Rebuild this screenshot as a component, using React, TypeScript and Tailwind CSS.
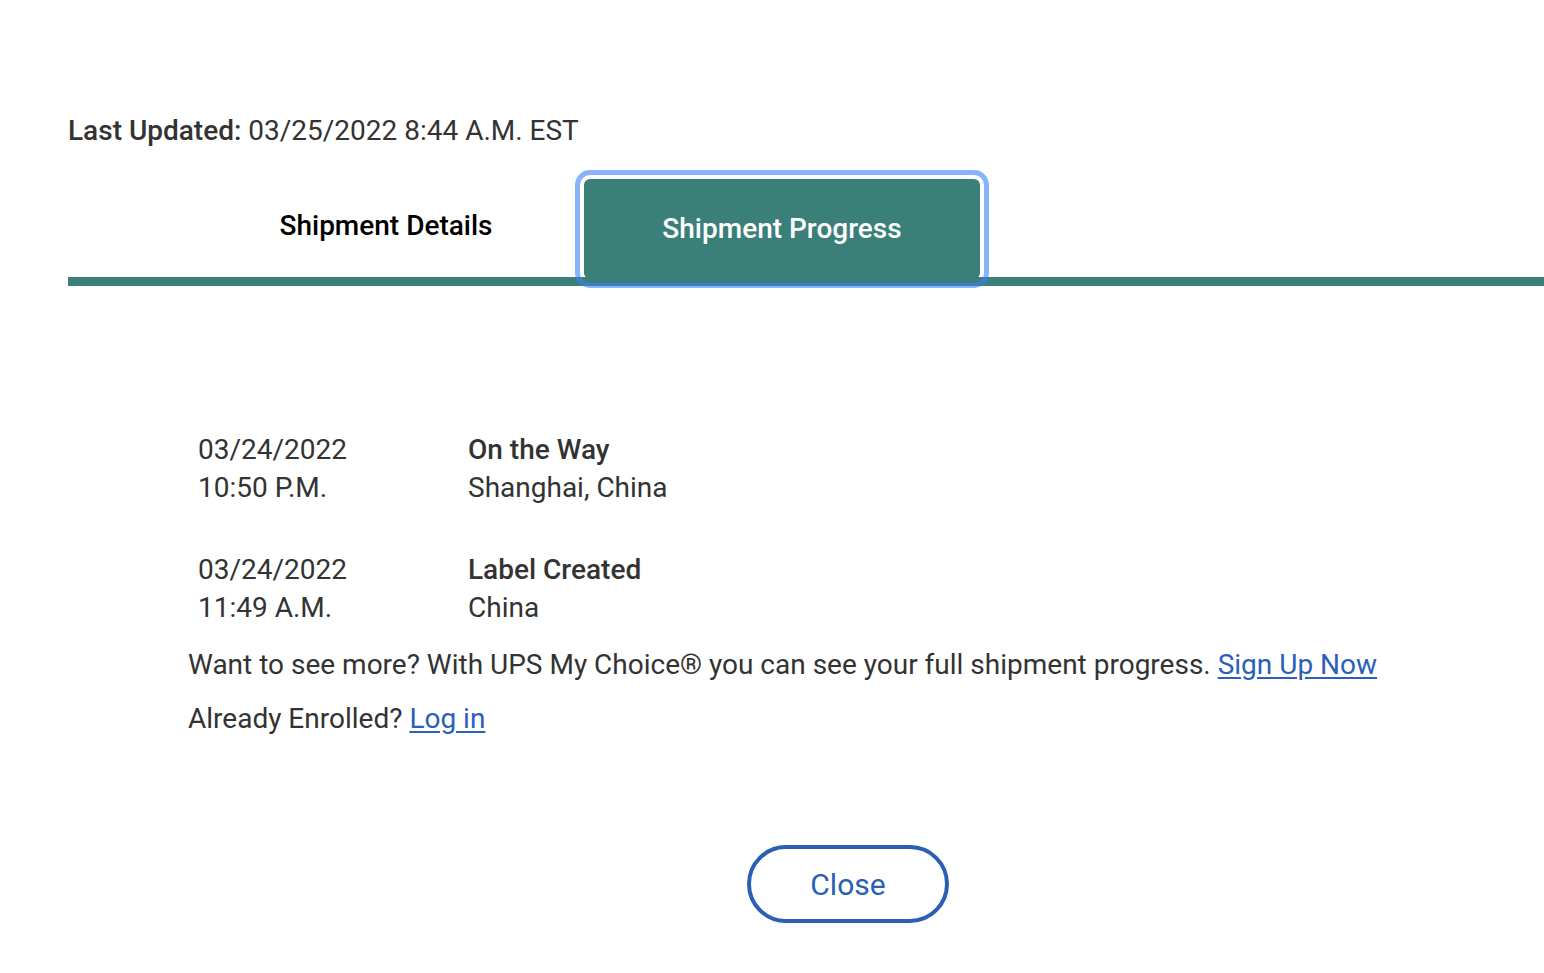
import { useState } from 'react'

const events = [
  { date: '03/24/2022', time: '10:50 P.M.', status: 'On the Way', place: 'Shanghai, China' },
  { date: '03/24/2022', time: '11:49 A.M.', status: 'Label Created', place: 'China' },
]

const App = () => {
  const [tab, setTab] = useState<'details' | 'progress'>('progress')

  return (
    <div className="min-h-screen bg-white pt-[112px] font-['Roboto',sans-serif] text-[#333333]">
      <p className="ml-[68px] text-[28px] leading-[38px]">
        <span className="font-medium">Last Updated:</span> 03/25/2022 8:44 A.M. EST
      </p>

      <div className="ml-[68px] mt-[29px] border-b-[9px] border-[#3a8079]">
        <div className="ml-[120px] flex">
          <button
            onClick={() => setTab('details')}
            className={`relative -mb-[2px] h-[100px] w-[396px] rounded-md pb-[6px] text-[28px] font-medium ${
              tab === 'details'
                ? 'bg-[#3a8079] text-white outline-[5px] outline-offset-[4px] outline-[#3b82f6]/60'
                : 'text-black'
            }`}
          >
            Shipment Details
          </button>
          <button
            onClick={() => setTab('progress')}
            className={`relative -mb-[2px] h-[100px] w-[396px] rounded-md text-[28px] font-medium ${
              tab === 'progress'
                ? 'bg-[#3a8079] text-white outline-[5px] outline-offset-[4px] outline-[#3b82f6]/60'
                : 'text-black'
            }`}
          >
            Shipment Progress
          </button>
        </div>
      </div>

      <div className="ml-[188px] w-[1320px] pt-[145px]">
        <div className="flex flex-col gap-[44px] pl-[10px]">
          {events.map((ev) => (
            <div key={ev.time} className="flex text-[28px] leading-[38px]">
              <div className="w-[270px]">
                <div>{ev.date}</div>
                <div>{ev.time}</div>
              </div>
              <div>
                <div className="font-medium">{ev.status}</div>
                <div>{ev.place}</div>
              </div>
            </div>
          ))}
        </div>

        <p className="mt-[19px] text-[28px] leading-[38px]">
          Want to see more? With UPS My Choice® you can see your full shipment progress.{' '}
          <a href="#" className="text-[#2a60b8] underline underline-offset-[3px]">
            Sign Up Now
          </a>
        </p>
        <p className="mt-[16px] text-[28px] leading-[38px]">
          Already Enrolled?{' '}
          <a href="#" className="text-[#2a60b8] underline underline-offset-[3px]">
            Log in
          </a>
        </p>

        <div className="mt-[107px] flex justify-center">
          <button className="h-[78px] w-[202px] rounded-full border-[4px] border-[#2a5fb5] text-[30px] text-[#2a5fb5]">
            Close
          </button>
        </div>
      </div>
    </div>
  )
}

export default App
